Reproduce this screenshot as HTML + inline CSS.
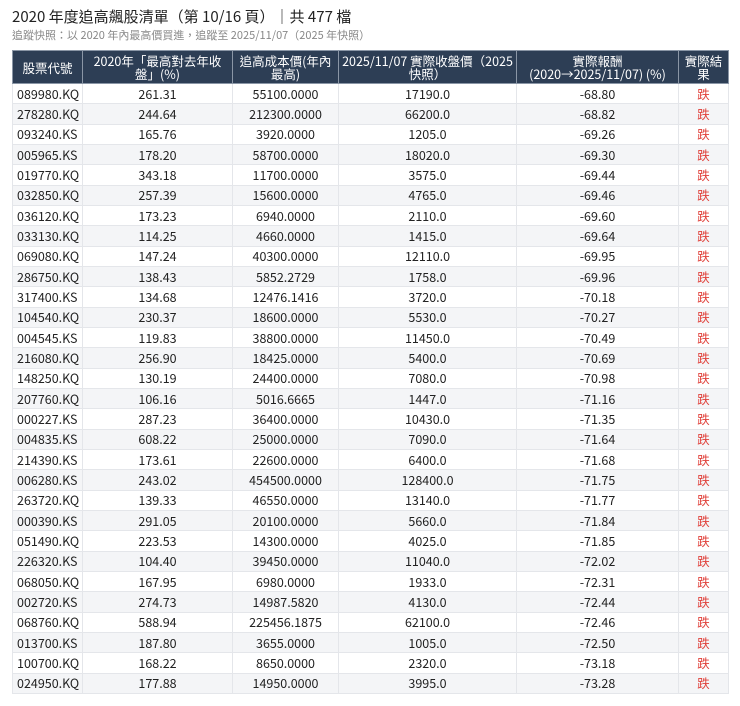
<!DOCTYPE html>
<html><head><meta charset="utf-8"><style>
body{margin:0;background:#fff;font-family:"Noto Sans CJK TC",sans-serif;color:#222;}
h1{position:absolute;left:12px;top:7px;margin:0;font-size:15px;line-height:20px;font-weight:normal;color:#222;white-space:nowrap;}
.sub{position:absolute;left:12px;top:28px;font-size:11px;line-height:14px;color:#888;white-space:nowrap;}
table{position:absolute;left:12px;top:50px;border-collapse:collapse;table-layout:fixed;width:716px;font-size:12.5px;}
th{background:#2d3e55;color:#fff;font-weight:normal;height:32px;line-height:13px;border:1px solid #8a96a6;padding:0 2px;text-align:center;font-size:12.5px;white-space:nowrap;overflow:hidden;}
tbody tr{height:20.33px;}
td{height:19.33px;padding:0 4px;border:1px solid #e4e6ea;text-align:center;line-height:16px;overflow:hidden;}
td:first-child{text-align:left;}
tr:nth-child(even) td{background:#f4f5f7;}
td.r{color:#e0403a;}
</style></head><body>
<h1>2020 年度追高飆股清單（第 10/16 頁）｜共 477 檔</h1>
<div class="sub">追蹤快照：以 2020 年內最高價買進，追蹤至 2025/11/07（2025 年快照）</div>
<table>
<colgroup><col style="width:70px"><col style="width:150px"><col style="width:106px"><col style="width:178px"><col style="width:162px"><col style="width:50px"></colgroup>
<thead><tr><th>股票代號</th><th>2020年「最高對去年收<br>盤」(%)</th><th>追高成本價(年內<br>最高)</th><th>2025/11/07 實際收盤價（2025<br>快照）</th><th>實際報酬<br>(2020→2025/11/07) (%)</th><th>實際結<br>果</th></tr></thead>
<tbody>
<tr><td>089980.KQ</td><td>261.31</td><td>55100.0000</td><td>17190.0</td><td>-68.80</td><td class="r">跌</td></tr>
<tr><td>278280.KQ</td><td>244.64</td><td>212300.0000</td><td>66200.0</td><td>-68.82</td><td class="r">跌</td></tr>
<tr><td>093240.KS</td><td>165.76</td><td>3920.0000</td><td>1205.0</td><td>-69.26</td><td class="r">跌</td></tr>
<tr><td>005965.KS</td><td>178.20</td><td>58700.0000</td><td>18020.0</td><td>-69.30</td><td class="r">跌</td></tr>
<tr><td>019770.KQ</td><td>343.18</td><td>11700.0000</td><td>3575.0</td><td>-69.44</td><td class="r">跌</td></tr>
<tr><td>032850.KQ</td><td>257.39</td><td>15600.0000</td><td>4765.0</td><td>-69.46</td><td class="r">跌</td></tr>
<tr><td>036120.KQ</td><td>173.23</td><td>6940.0000</td><td>2110.0</td><td>-69.60</td><td class="r">跌</td></tr>
<tr><td>033130.KQ</td><td>114.25</td><td>4660.0000</td><td>1415.0</td><td>-69.64</td><td class="r">跌</td></tr>
<tr><td>069080.KQ</td><td>147.24</td><td>40300.0000</td><td>12110.0</td><td>-69.95</td><td class="r">跌</td></tr>
<tr><td>286750.KQ</td><td>138.43</td><td>5852.2729</td><td>1758.0</td><td>-69.96</td><td class="r">跌</td></tr>
<tr><td>317400.KS</td><td>134.68</td><td>12476.1416</td><td>3720.0</td><td>-70.18</td><td class="r">跌</td></tr>
<tr><td>104540.KQ</td><td>230.37</td><td>18600.0000</td><td>5530.0</td><td>-70.27</td><td class="r">跌</td></tr>
<tr><td>004545.KS</td><td>119.83</td><td>38800.0000</td><td>11450.0</td><td>-70.49</td><td class="r">跌</td></tr>
<tr><td>216080.KQ</td><td>256.90</td><td>18425.0000</td><td>5400.0</td><td>-70.69</td><td class="r">跌</td></tr>
<tr><td>148250.KQ</td><td>130.19</td><td>24400.0000</td><td>7080.0</td><td>-70.98</td><td class="r">跌</td></tr>
<tr><td>207760.KQ</td><td>106.16</td><td>5016.6665</td><td>1447.0</td><td>-71.16</td><td class="r">跌</td></tr>
<tr><td>000227.KS</td><td>287.23</td><td>36400.0000</td><td>10430.0</td><td>-71.35</td><td class="r">跌</td></tr>
<tr><td>004835.KS</td><td>608.22</td><td>25000.0000</td><td>7090.0</td><td>-71.64</td><td class="r">跌</td></tr>
<tr><td>214390.KS</td><td>173.61</td><td>22600.0000</td><td>6400.0</td><td>-71.68</td><td class="r">跌</td></tr>
<tr><td>006280.KS</td><td>243.02</td><td>454500.0000</td><td>128400.0</td><td>-71.75</td><td class="r">跌</td></tr>
<tr><td>263720.KQ</td><td>139.33</td><td>46550.0000</td><td>13140.0</td><td>-71.77</td><td class="r">跌</td></tr>
<tr><td>000390.KS</td><td>291.05</td><td>20100.0000</td><td>5660.0</td><td>-71.84</td><td class="r">跌</td></tr>
<tr><td>051490.KQ</td><td>223.53</td><td>14300.0000</td><td>4025.0</td><td>-71.85</td><td class="r">跌</td></tr>
<tr><td>226320.KS</td><td>104.40</td><td>39450.0000</td><td>11040.0</td><td>-72.02</td><td class="r">跌</td></tr>
<tr><td>068050.KQ</td><td>167.95</td><td>6980.0000</td><td>1933.0</td><td>-72.31</td><td class="r">跌</td></tr>
<tr><td>002720.KS</td><td>274.73</td><td>14987.5820</td><td>4130.0</td><td>-72.44</td><td class="r">跌</td></tr>
<tr><td>068760.KQ</td><td>588.94</td><td>225456.1875</td><td>62100.0</td><td>-72.46</td><td class="r">跌</td></tr>
<tr><td>013700.KS</td><td>187.80</td><td>3655.0000</td><td>1005.0</td><td>-72.50</td><td class="r">跌</td></tr>
<tr><td>100700.KQ</td><td>168.22</td><td>8650.0000</td><td>2320.0</td><td>-73.18</td><td class="r">跌</td></tr>
<tr><td>024950.KQ</td><td>177.88</td><td>14950.0000</td><td>3995.0</td><td>-73.28</td><td class="r">跌</td></tr>
</tbody></table>
</body></html>
